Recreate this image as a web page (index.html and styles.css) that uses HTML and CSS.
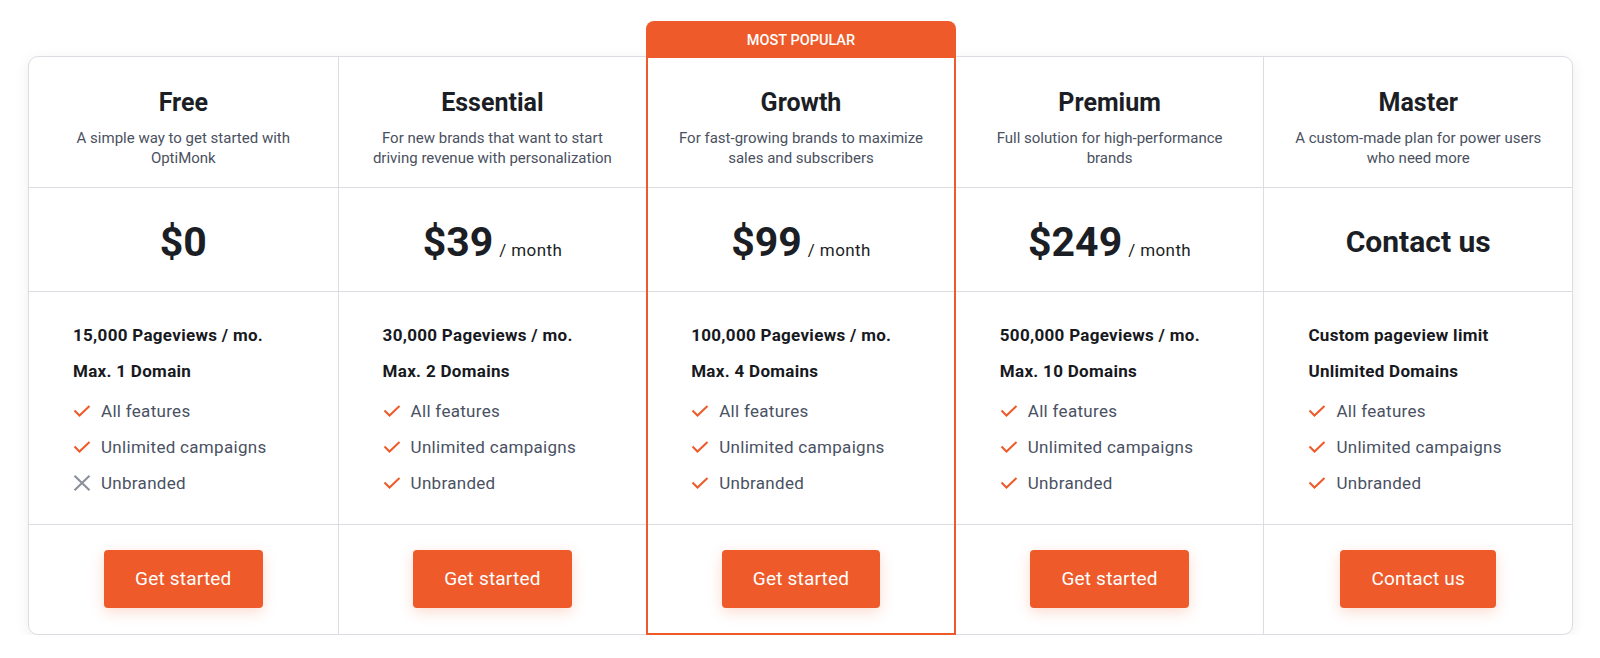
FILE: index.html
```html
<!DOCTYPE html>
<html lang="en">
<head>
<meta charset="utf-8">
<title>Pricing</title>
<link rel="stylesheet" href="styles.css">
</head>
<body>
<div class="pricing">
  <div class="plan">
    <div class="plan-head"><h2 class="plan-name">Free</h2><p class="plan-desc">A simple way to get started with OptiMonk</p></div>
    <div class="plan-price"><span class="amount">$0</span></div>
    <div class="plan-features">
      <div class="limit">15,000 Pageviews / mo.</div>
      <div class="limit">Max. 1 Domain</div>
      <ul class="feat-list">
        <li><svg class="ic" viewBox="0 0 18 12"><path d="M1.5 5.5 L6.5 10.5 L16.5 1" fill="none" stroke="#ee5a29" stroke-width="2"/></svg>All features</li>
        <li><svg class="ic" viewBox="0 0 18 12"><path d="M1.5 5.5 L6.5 10.5 L16.5 1" fill="none" stroke="#ee5a29" stroke-width="2"/></svg>Unlimited campaigns</li>
        <li><svg class="ic ic-x" viewBox="0 0 18 16"><path d="M1.5 0.8 L16.5 15.2 M16.5 0.8 L1.5 15.2" fill="none" stroke="#8c929c" stroke-width="2.2"/></svg>Unbranded</li>
      </ul>
    </div>
    <div class="plan-cta"><a class="btn" href="#">Get started</a></div>
  </div>
  <div class="plan">
    <div class="plan-head"><h2 class="plan-name">Essential</h2><p class="plan-desc">For new brands that want to start driving revenue with personalization</p></div>
    <div class="plan-price"><span class="amount">$39</span><span class="per">/ month</span></div>
    <div class="plan-features">
      <div class="limit">30,000 Pageviews / mo.</div>
      <div class="limit">Max. 2 Domains</div>
      <ul class="feat-list">
        <li><svg class="ic" viewBox="0 0 18 12"><path d="M1.5 5.5 L6.5 10.5 L16.5 1" fill="none" stroke="#ee5a29" stroke-width="2"/></svg>All features</li>
        <li><svg class="ic" viewBox="0 0 18 12"><path d="M1.5 5.5 L6.5 10.5 L16.5 1" fill="none" stroke="#ee5a29" stroke-width="2"/></svg>Unlimited campaigns</li>
        <li><svg class="ic" viewBox="0 0 18 12"><path d="M1.5 5.5 L6.5 10.5 L16.5 1" fill="none" stroke="#ee5a29" stroke-width="2"/></svg>Unbranded</li>
      </ul>
    </div>
    <div class="plan-cta"><a class="btn" href="#">Get started</a></div>
  </div>
  <div class="plan popular">
    <div class="badge">MOST POPULAR</div>
    <div class="plan-head"><h2 class="plan-name">Growth</h2><p class="plan-desc">For fast-growing brands to maximize sales and subscribers</p></div>
    <div class="plan-price"><span class="amount">$99</span><span class="per">/ month</span></div>
    <div class="plan-features">
      <div class="limit">100,000 Pageviews / mo.</div>
      <div class="limit">Max. 4 Domains</div>
      <ul class="feat-list">
        <li><svg class="ic" viewBox="0 0 18 12"><path d="M1.5 5.5 L6.5 10.5 L16.5 1" fill="none" stroke="#ee5a29" stroke-width="2"/></svg>All features</li>
        <li><svg class="ic" viewBox="0 0 18 12"><path d="M1.5 5.5 L6.5 10.5 L16.5 1" fill="none" stroke="#ee5a29" stroke-width="2"/></svg>Unlimited campaigns</li>
        <li><svg class="ic" viewBox="0 0 18 12"><path d="M1.5 5.5 L6.5 10.5 L16.5 1" fill="none" stroke="#ee5a29" stroke-width="2"/></svg>Unbranded</li>
      </ul>
    </div>
    <div class="plan-cta"><a class="btn" href="#">Get started</a></div>
  </div>
  <div class="plan">
    <div class="plan-head"><h2 class="plan-name">Premium</h2><p class="plan-desc">Full solution for high-performance brands</p></div>
    <div class="plan-price"><span class="amount">$249</span><span class="per">/ month</span></div>
    <div class="plan-features">
      <div class="limit">500,000 Pageviews / mo.</div>
      <div class="limit">Max. 10 Domains</div>
      <ul class="feat-list">
        <li><svg class="ic" viewBox="0 0 18 12"><path d="M1.5 5.5 L6.5 10.5 L16.5 1" fill="none" stroke="#ee5a29" stroke-width="2"/></svg>All features</li>
        <li><svg class="ic" viewBox="0 0 18 12"><path d="M1.5 5.5 L6.5 10.5 L16.5 1" fill="none" stroke="#ee5a29" stroke-width="2"/></svg>Unlimited campaigns</li>
        <li><svg class="ic" viewBox="0 0 18 12"><path d="M1.5 5.5 L6.5 10.5 L16.5 1" fill="none" stroke="#ee5a29" stroke-width="2"/></svg>Unbranded</li>
      </ul>
    </div>
    <div class="plan-cta"><a class="btn" href="#">Get started</a></div>
  </div>
  <div class="plan">
    <div class="plan-head"><h2 class="plan-name">Master</h2><p class="plan-desc">A custom-made plan for power users who need more</p></div>
    <div class="plan-price"><span class="amount amount-text">Contact us</span></div>
    <div class="plan-features">
      <div class="limit">Custom pageview limit</div>
      <div class="limit">Unlimited Domains</div>
      <ul class="feat-list">
        <li><svg class="ic" viewBox="0 0 18 12"><path d="M1.5 5.5 L6.5 10.5 L16.5 1" fill="none" stroke="#ee5a29" stroke-width="2"/></svg>All features</li>
        <li><svg class="ic" viewBox="0 0 18 12"><path d="M1.5 5.5 L6.5 10.5 L16.5 1" fill="none" stroke="#ee5a29" stroke-width="2"/></svg>Unlimited campaigns</li>
        <li><svg class="ic" viewBox="0 0 18 12"><path d="M1.5 5.5 L6.5 10.5 L16.5 1" fill="none" stroke="#ee5a29" stroke-width="2"/></svg>Unbranded</li>
      </ul>
    </div>
    <div class="plan-cta"><a class="btn" href="#">Contact us</a></div>
  </div>
</div>
</body>
</html>
```

FILE: styles.css
```css
* { box-sizing: border-box; }

html, body {
  margin: 0;
  padding: 0;
  background: #ffffff;
  font-family: Roboto, "Liberation Sans", Arial, sans-serif;
  color: #1b1e24;
}

.pricing {
  margin: 56px 27px 0 28px;
  border: 1px solid #dcdde3;
  border-radius: 10px;
  display: grid;
  grid-template-columns: repeat(5, 1fr);
  background: #fff;
  box-shadow: 0 3px 14px rgba(20, 24, 40, 0.07);
}

.plan {
  display: flex;
  flex-direction: column;
  min-width: 0;
}

.plan + .plan {
  border-left: 1px solid #dcdde3;
}

.plan.popular {
  position: relative;
}

.plan.popular::after {
  content: "";
  position: absolute;
  left: -1px;
  right: -1px;
  top: 0;
  bottom: -1px;
  border: 2px solid #ee5a29;
  border-top: none;
  pointer-events: none;
}

.badge {
  position: absolute;
  top: -36px;
  left: -1px;
  right: -1px;
  height: 37px;
  background: #ee5a29;
  border-radius: 8px 8px 0 0;
  color: #fff;
  font-size: 14.5px;
  font-weight: 500;
  display: flex;
  align-items: center;
  justify-content: center;
  padding-top: 1px;
}

.plan-head {
  height: 131px;
  border-bottom: 1px solid #dcdde3;
  padding: 30px 24px 0;
  text-align: center;
}

.plan-name {
  margin: 0;
  font-size: 25px;
  line-height: 32px;
  font-weight: 700;
  color: #1b1e24;
}

.plan-desc {
  margin: 9px 0 0;
  font-size: 15px;
  line-height: 20px;
  color: #4a5160;
}

.plan-price {
  height: 104px;
  border-bottom: 1px solid #dcdde3;
  display: flex;
  align-items: baseline;
  justify-content: center;
  padding-top: 29px;
}

.amount {
  font-size: 41px;
  line-height: 50px;
  font-weight: 700;
  color: #1b1e24;
}

.amount-text {
  font-size: 30px;
}

.per {
  font-size: 17px;
  letter-spacing: 0.4px;
  color: #1b1e24;
  margin-left: 6px;
}

.plan-features {
  height: 233px;
  border-bottom: 1px solid #dcdde3;
  padding: 31px 16px 0 44px;
  display: flex;
  flex-direction: column;
  gap: 12px;
}

.limit {
  font-size: 17px;
  letter-spacing: 0.3px;
  line-height: 24px;
  font-weight: 700;
  color: #17191e;
}

.feat-list {
  list-style: none;
  margin: 4px 0 0;
  padding: 0;
  display: flex;
  flex-direction: column;
  gap: 12px;
}

.feat-list li {
  display: flex;
  align-items: center;
  gap: 10px;
  font-size: 17px;
  letter-spacing: 0.3px;
  line-height: 24px;
  color: #4a5163;
}

.ic {
  width: 18px;
  height: 12px;
  flex: none;
}

.ic-x {
  height: 16px;
}

.plan-cta {
  height: 109px;
  display: flex;
  align-items: center;
  justify-content: center;
  padding-bottom: 2px;
}

.btn {
  display: inline-flex;
  align-items: center;
  justify-content: center;
  height: 58px;
  padding: 0 31px;
  background: #ee5a29;
  color: #fff;
  font-size: 19px;
  letter-spacing: 0.2px;
  text-decoration: none;
  border-radius: 4px;
  box-shadow: 0 4px 14px rgba(238, 90, 41, 0.22);
}
```
